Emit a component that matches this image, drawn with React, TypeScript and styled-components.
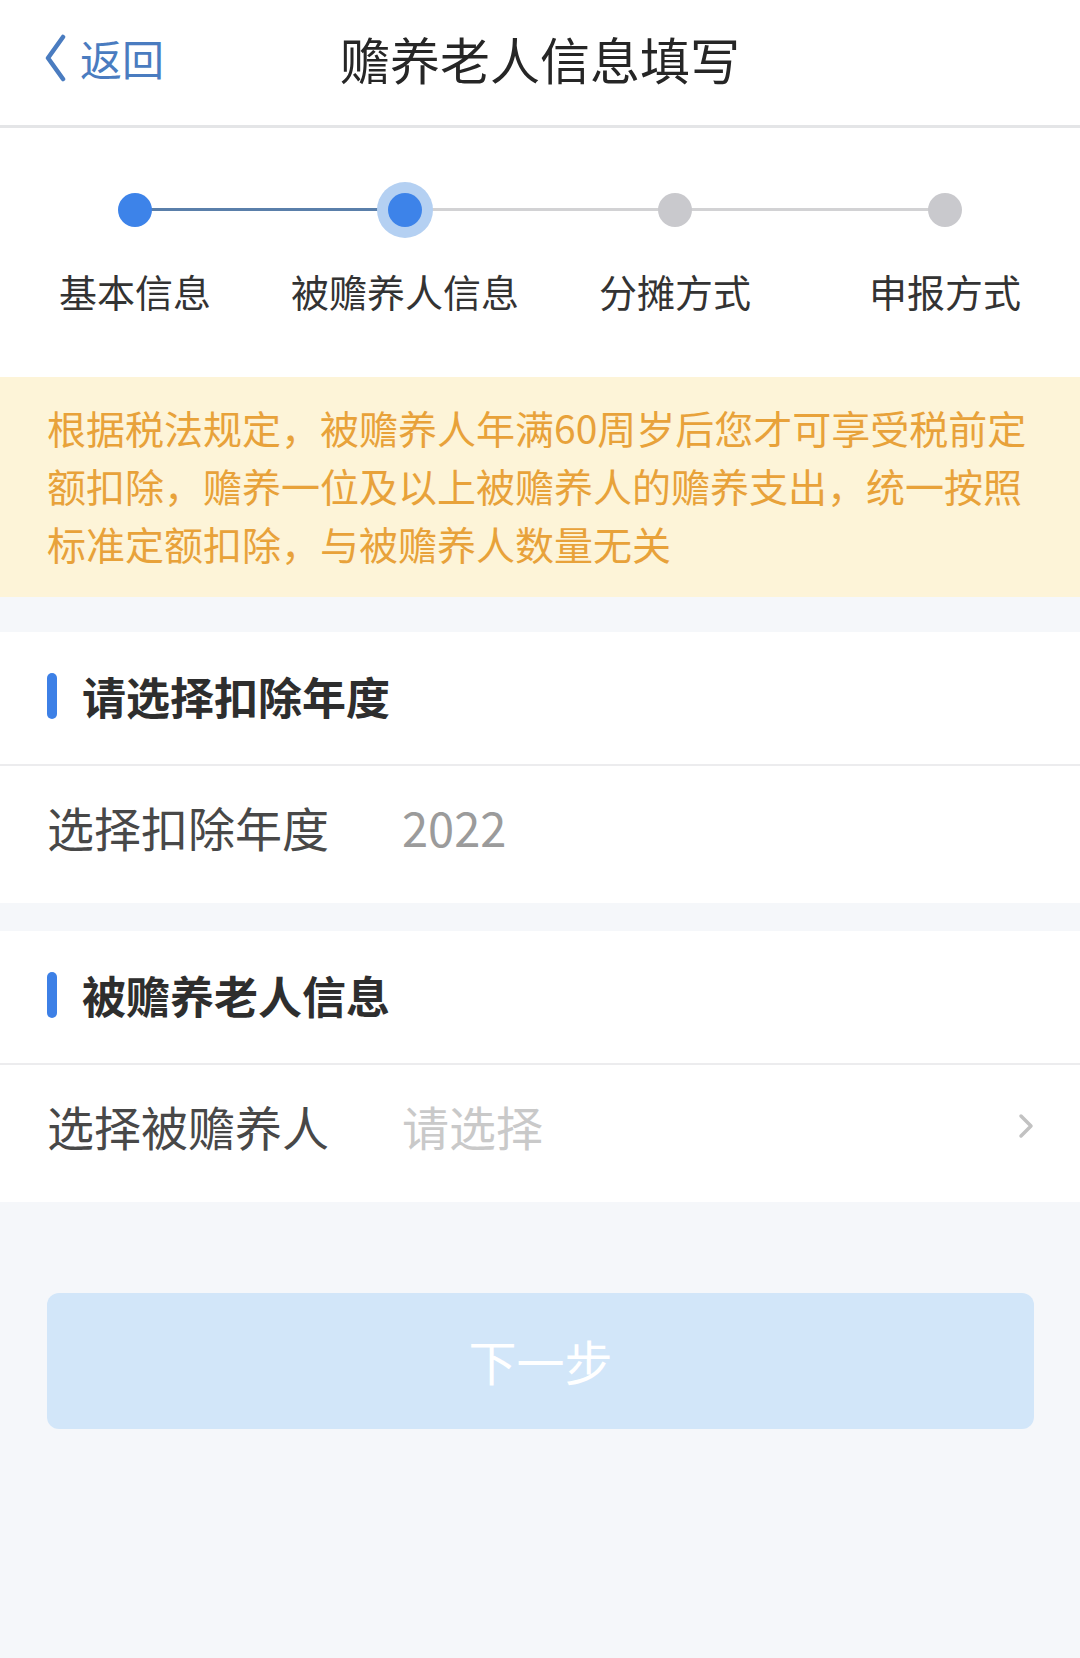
import React from "react";
import styled, { createGlobalStyle } from "styled-components";

const GlobalStyle = createGlobalStyle`
  html, body {
    margin: 0;
    padding: 0;
    background: #f5f7fa;
    font-family: "Noto Sans CJK SC", "Noto Sans", sans-serif;
  }
  * { box-sizing: border-box; }
`;

const Page = styled.div`
  width: 1080px;
  min-height: 1658px;
  background: #f5f7fa;
  display: flex;
  flex-direction: column;
`;

const Header = styled.header`
  height: 128px;
  background: #ffffff;
  border-bottom: 3px solid #e4e5e7;
  display: grid;
  grid-template-columns: 1fr auto 1fr;
  align-items: center;
  padding-bottom: 9px;
`;

const Back = styled.div`
  display: flex;
  align-items: center;
  gap: 14px;
  padding-left: 44px;
  color: #4a7cc0;
  font-size: 42px;
  line-height: 1;
`;

const Title = styled.h1`
  margin: 0;
  font-size: 50px;
  font-weight: 400;
  color: #262626;
  letter-spacing: 0;
`;

const Stepper = styled.div`
  background: #ffffff;
  display: grid;
  grid-template-columns: repeat(4, 270px);
  padding: 54px 0 61px;
`;

const Step = styled.div`
  display: flex;
  flex-direction: column;
  align-items: center;
  gap: 28px;
`;

const DotRow = styled.div<{ $left?: string; $right?: string }>`
  position: relative;
  width: 100%;
  height: 56px;
  display: flex;
  align-items: center;
  justify-content: center;

  &::before,
  &::after {
    content: "";
    position: absolute;
    top: 26px;
    height: 3px;
  }
  &::before {
    left: 0;
    right: 50%;
    background: ${(p) => p.$left || "transparent"};
  }
  &::after {
    left: 50%;
    right: 0;
    background: ${(p) => p.$right || "transparent"};
  }
`;

const Dot = styled.div<{ $state: "done" | "active" | "todo" }>`
  position: relative;
  z-index: 1;
  width: 34px;
  height: 34px;
  border-radius: 50%;
  background: ${(p) => (p.$state === "todo" ? "#c9c9cd" : "#3d83e9")};
  box-shadow: ${(p) => (p.$state === "active" ? "0 0 0 11px #b4d0f2" : "none")};
`;

const StepLabel = styled.div`
  font-size: 38px;
  line-height: 50px;
  color: #333333;
  white-space: nowrap;
`;

const Notice = styled.div`
  background: #fdf4d8;
  color: #e8a23a;
  font-size: 39px;
  line-height: 58px;
  padding: 21px 47px 25px;
`;

const Section = styled.section<{ $gap: number }>`
  margin-top: ${(p) => p.$gap}px;
  background: #ffffff;
`;

const SectionHead = styled.div`
  height: 134px;
  display: flex;
  align-items: center;
  gap: 25px;
  padding-left: 47px;
  padding-bottom: 4px;
  border-bottom: 2px solid #ececee;
`;

const Bar = styled.span`
  width: 10px;
  height: 46px;
  border-radius: 5px;
  background: #3d80e6;
`;

const SectionTitle = styled.h2`
  margin: 0;
  font-size: 44px;
  font-weight: 700;
  color: #2e2e2e;
`;

const Row = styled.div`
  height: 137px;
  display: flex;
  align-items: center;
  padding: 0 46px 16px 47px;
`;

const RowLabel = styled.div`
  width: 355px;
  font-size: 47px;
  color: #484848;
`;

const RowValue = styled.div<{ $placeholder?: boolean }>`
  flex: 1;
  font-size: 47px;
  color: ${(p) => (p.$placeholder ? "#c9c9c9" : "#9b9b9b")};
`;

const NextButton = styled.button`
  margin: 91px 46px 0 47px;
  height: 136px;
  border: none;
  border-radius: 12px;
  background: #d2e6f9;
  color: #ffffff;
  font-family: inherit;
  font-size: 48px;
  padding-bottom: 4px;
  cursor: pointer;
`;

const steps: { label: string; state: "done" | "active" | "todo"; left?: string; right?: string }[] = [
  { label: "基本信息", state: "done", right: "#5a7faa" },
  { label: "被赡养人信息", state: "active", left: "#5a7faa", right: "#d2d2d4" },
  { label: "分摊方式", state: "todo", left: "#d2d2d4", right: "#d2d2d4" },
  { label: "申报方式", state: "todo", left: "#d2d2d4" },
];

export default function App() {
  return (
    <>
      <GlobalStyle />
      <Page>
        <Header>
          <Back>
            <svg width="22" height="48" viewBox="0 0 22 48" fill="none">
              <path d="M19 3 L4 24 L19 45" stroke="#4a7cc0" strokeWidth="4.5" strokeLinecap="round" strokeLinejoin="round" />
            </svg>
            <span>返回</span>
          </Back>
          <Title>赡养老人信息填写</Title>
          <div />
        </Header>

        <Stepper>
          {steps.map((s) => (
            <Step key={s.label}>
              <DotRow $left={s.left} $right={s.right}>
                <Dot $state={s.state} />
              </DotRow>
              <StepLabel>{s.label}</StepLabel>
            </Step>
          ))}
        </Stepper>

        <Notice>
          根据税法规定，被赡养人年满60周岁后您才可享受税前定额扣除，赡养一位及以上被赡养人的赡养支出，统一按照标准定额扣除，与被赡养人数量无关
        </Notice>

        <Section $gap={35}>
          <SectionHead>
            <Bar />
            <SectionTitle>请选择扣除年度</SectionTitle>
          </SectionHead>
          <Row>
            <RowLabel>选择扣除年度</RowLabel>
            <RowValue>2022</RowValue>
          </Row>
        </Section>

        <Section $gap={28}>
          <SectionHead>
            <Bar />
            <SectionTitle>被赡养老人信息</SectionTitle>
          </SectionHead>
          <Row>
            <RowLabel>选择被赡养人</RowLabel>
            <RowValue $placeholder>请选择</RowValue>
            <svg width="16" height="26" viewBox="0 0 16 26" fill="none">
              <path d="M3 3 L13 13 L3 23" stroke="#c2c2c2" strokeWidth="3.5" strokeLinecap="round" strokeLinejoin="round" />
            </svg>
          </Row>
        </Section>

        <NextButton>下一步</NextButton>
      </Page>
    </>
  );
}
